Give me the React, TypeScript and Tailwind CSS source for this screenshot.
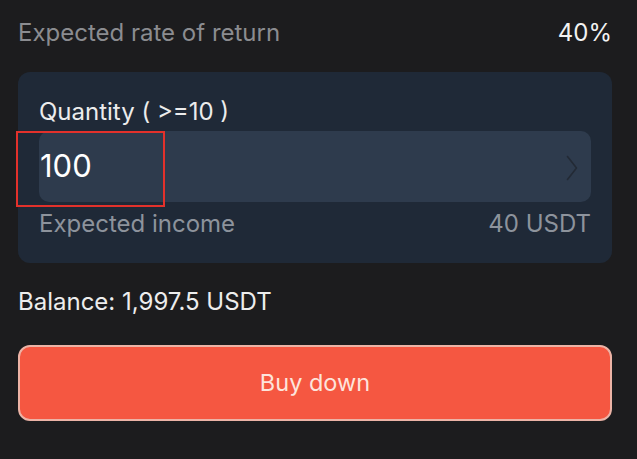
export default function App() {
  return (
    <div className="w-[637px] h-[459px] bg-[#1c1c1e] pl-[18px] pr-[25px] overflow-hidden" style={{ fontFamily: 'Inter, "Noto Sans", sans-serif' }}>
      <div className="h-[66px] flex items-center justify-between text-[24px] leading-[28px]">
        <span className="text-[#8b8c90]">Expected rate of return</span>
        <span className="text-[#f2f2f2]">40%</span>
      </div>

      <div className="relative mt-[6px] bg-[#1f2937] rounded-[12px] px-[21px] pt-[26px] pb-[25px]">
        <div className="text-[24px] leading-[28px] text-[#ececec] mb-[5px]">Quantity ( &gt;=10 )</div>
        <div className="h-[71px] bg-[#2e3b4d] rounded-[10px] flex items-center justify-between pl-[1px] pr-[13px]">
          <span className="text-[31px] text-white">100</span>
          <svg width="12" height="26" viewBox="0 0 12 26" fill="none" className="mt-[2px]">
            <polyline points="1.5,1.5 10.5,13 1.5,24.5" stroke="#232a35" strokeWidth="1.6" strokeLinecap="round" strokeLinejoin="round" />
          </svg>
        </div>
        <div className="mt-[8px] flex justify-between text-[24px] leading-[28px] text-[#8d939c]">
          <span>Expected income</span>
          <span>40 USDT</span>
        </div>
        <div className="absolute left-[-2px] top-[59px] w-[149px] h-[76px] border-2 border-[#e3312b]" />
      </div>

      <div className="mt-[25px] text-[24px] leading-[28px] text-[#ededed]">Balance: 1,997.5 USDT</div>

      <button className="mt-[29px] w-full h-[76px] rounded-[12px] bg-[#f55741] border-2 border-[#ecb3a6] text-[23.5px] text-[#fde4dc]">
        Buy down
      </button>
    </div>
  );
}
